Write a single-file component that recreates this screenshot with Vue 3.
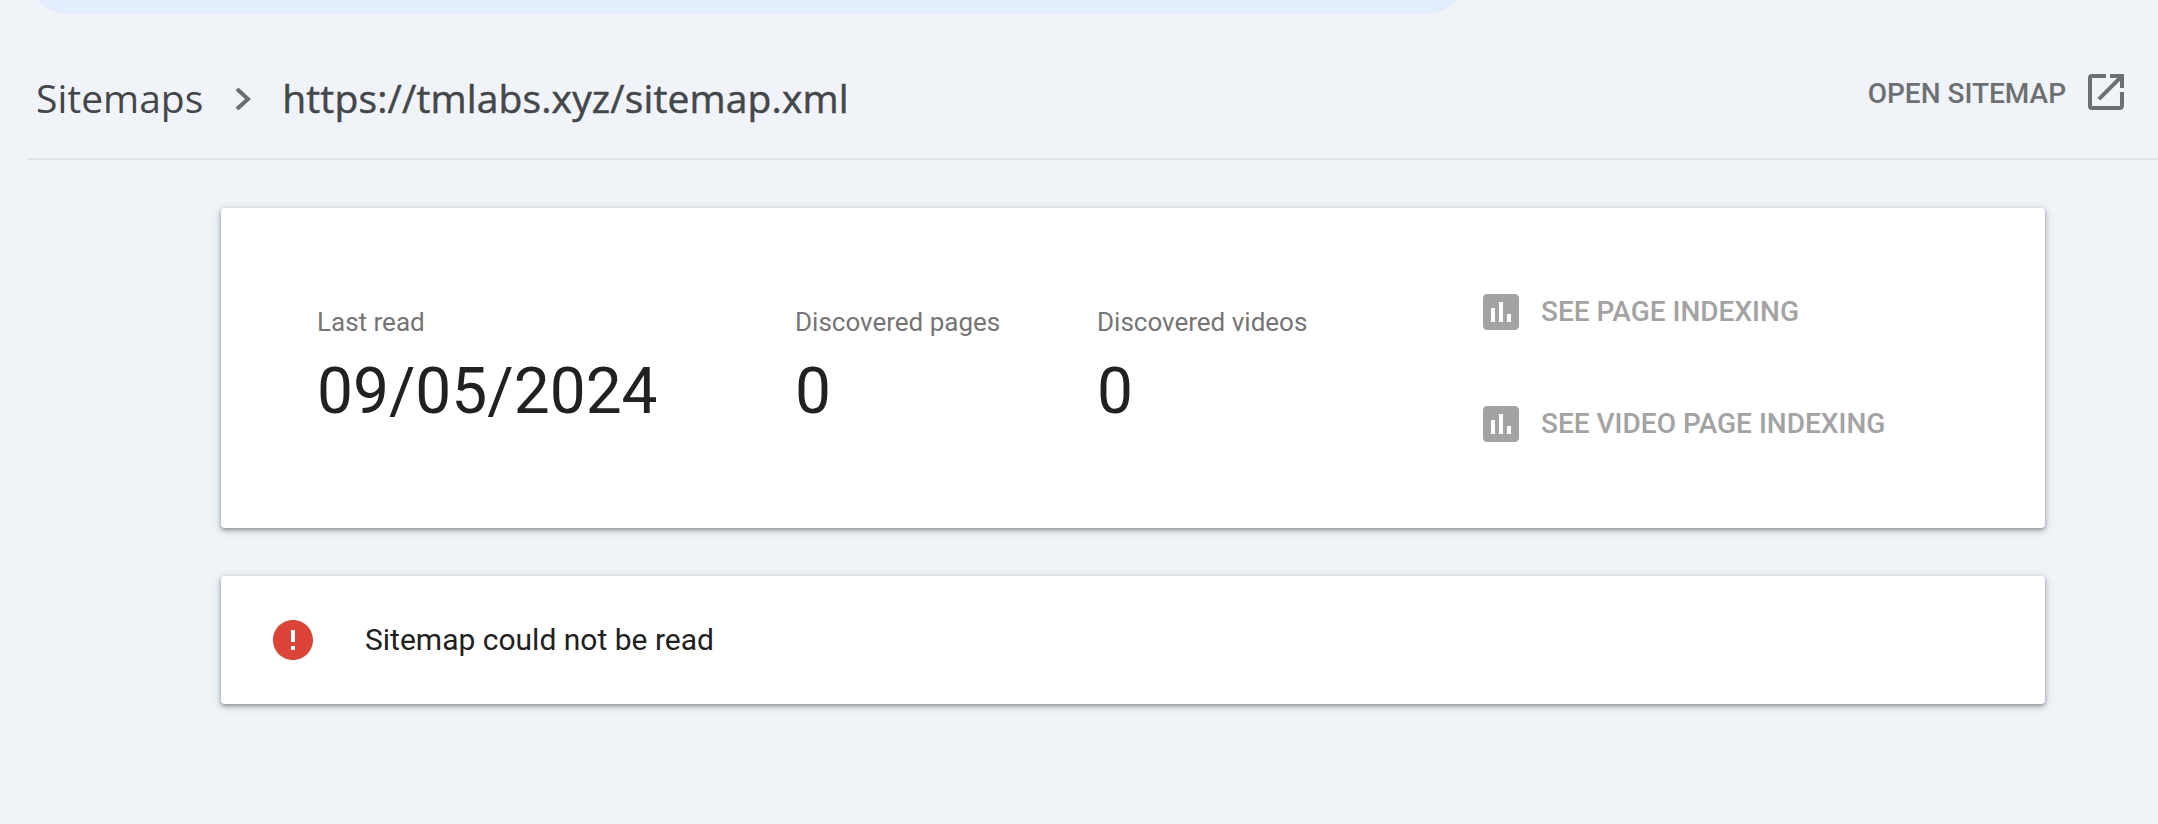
<script setup>
const stats = [
  { label: 'Last read', value: '09/05/2024', cls: 'date' },
  { label: 'Discovered pages', value: '0', cls: 'pages' },
  { label: 'Discovered videos', value: '0', cls: 'videos' },
]
const links = ['SEE PAGE INDEXING', 'SEE VIDEO PAGE INDEXING']
</script>

<template>
  <div class="page">
    <div class="pill-clip"><div class="pill"></div></div>
    <header class="bar">
      <div class="crumbs">
        <span class="crumb">Sitemaps</span>
        <svg class="chev" viewBox="0 0 16 22" width="16" height="22"><path d="M2 1l11 10L2 21" fill="none" stroke="#6b6e71" stroke-width="4"/></svg>
        <span class="current">https://tmlabs.xyz/sitemap.xml</span>
      </div>
      <div class="open">
        <span class="open-text">OPEN SITEMAP</span>
        <svg viewBox="0 0 24 24" width="48" height="48"><path fill="#6d7073" d="M19 19H5V5h7V3H5a2 2 0 0 0-2 2v14a2 2 0 0 0 2 2h14c1.1 0 2-.9 2-2v-7h-2v7zM14 3v2h3.59l-9.83 9.83 1.41 1.41L19 6.41V10h2V3h-7z"/></svg>
      </div>
    </header>
    <main class="content">
      <section class="card summary">
        <div v-for="s in stats" :key="s.label" class="stat" :class="s.cls">
          <div class="label">{{ s.label }}</div>
          <div class="value">{{ s.value }}</div>
        </div>
        <div class="links">
          <div v-for="l in links" :key="l" class="link">
            <svg viewBox="3 3 18 18" width="36" height="36"><path fill="#a3a3a3" d="M19 3H5c-1.1 0-2 .9-2 2v14c0 1.1.9 2 2 2h14c1.1 0 2-.9 2-2V5c0-1.1-.9-2-2-2zM9 17H7v-7h2v7zm4 0h-2V7h2v10zm4 0h-2v-4h2v4z"/></svg>
            <span class="link-text">{{ l }}</span>
          </div>
        </div>
      </section>
      <section class="card error">
        <svg viewBox="2 2 20 20" width="40" height="40"><path fill="#db4437" d="M12 2C6.48 2 2 6.48 2 12s4.48 10 10 10 10-4.48 10-10S17.52 2 12 2zm1 15h-2v-2h2v2zm0-4h-2V7h2v6z"/></svg>
        <span class="error-text">Sitemap could not be read</span>
      </section>
    </main>
  </div>
</template>

<style>
html, body { margin: 0; background: #f0f4f9; }
</style>

<style scoped>
.page {
  width: 2158px;
  height: 824px;
  overflow: hidden;
  background: #f0f4f9;
  font-family: Roboto, "Liberation Sans", sans-serif;
}
.pill-clip {
  height: 14px;
  overflow: hidden;
  display: flex;
  align-items: flex-end;
}
.pill {
  flex: none;
  height: 80px;
  width: 1439px;
  margin-left: 28px;
  background: #e3edfe;
  border-radius: 40px;
}
.bar {
  margin-left: 28px;
  height: 146px;
  box-sizing: border-box;
  border-bottom: 2px solid #e0e3e6;
  display: flex;
  justify-content: space-between;
  align-items: flex-start;
  padding-top: 54px;
}
.crumbs {
  display: flex;
  align-items: center;
  height: 58px;
  padding-left: 8px;
}
.crumb {
  font-family: "Open Sans", sans-serif;
  font-size: 39px;
  color: #44474a;
}
.chev { margin: 3px 31px 0 32px; }
.current {
  font-family: "Open Sans", sans-serif;
  font-size: 39px;
  font-weight: 500;
  letter-spacing: 0.14px;
  -webkit-text-stroke: 0.5px #44474a;
  color: #44474a;
}
.open {
  display: flex;
  align-items: center;
  height: 48px;
  padding-right: 28px;
  font-size: 28px;
  font-weight: 500;
  color: #6d7073;
  gap: 16px;
}
.open-text { padding-top: 2px; }
.content {
  margin-left: 221px;
  width: 1824px;
  padding-top: 48px;
  display: flex;
  flex-direction: column;
  gap: 48px;
}
.card {
  background: #fff;
  border-radius: 4px;
  box-shadow: 0 2px 4px rgba(60, 64, 67, .5), 0 2px 8px 2px rgba(60, 64, 67, .12);
}
.summary {
  height: 320px;
  display: flex;
  align-items: flex-start;
  box-sizing: border-box;
  padding: 96px 0 0 96px;
}
.stat { flex: none; }
.date { width: 478px; }
.pages { width: 302px; }
.videos { width: 386px; }
.label {
  font-size: 26px;
  line-height: 36px;
  color: #757575;
}
.value {
  margin-top: 14px;
  font-size: 64px;
  line-height: 76px;
  color: #212121;
}
.links {
  display: flex;
  flex-direction: column;
  gap: 76px;
  margin-top: -10px;
}
.link {
  display: flex;
  align-items: center;
  gap: 22px;
  font-size: 28px;
  font-weight: 500;
  color: #a3a3a3;
}
.link-text { margin-top: -1px; }
.error {
  height: 128px;
  display: flex;
  align-items: center;
  box-sizing: border-box;
  padding-left: 52px;
  gap: 52px;
  font-size: 30px;
  color: #212121;
}
.error-text { margin-top: -2px; }
</style>
